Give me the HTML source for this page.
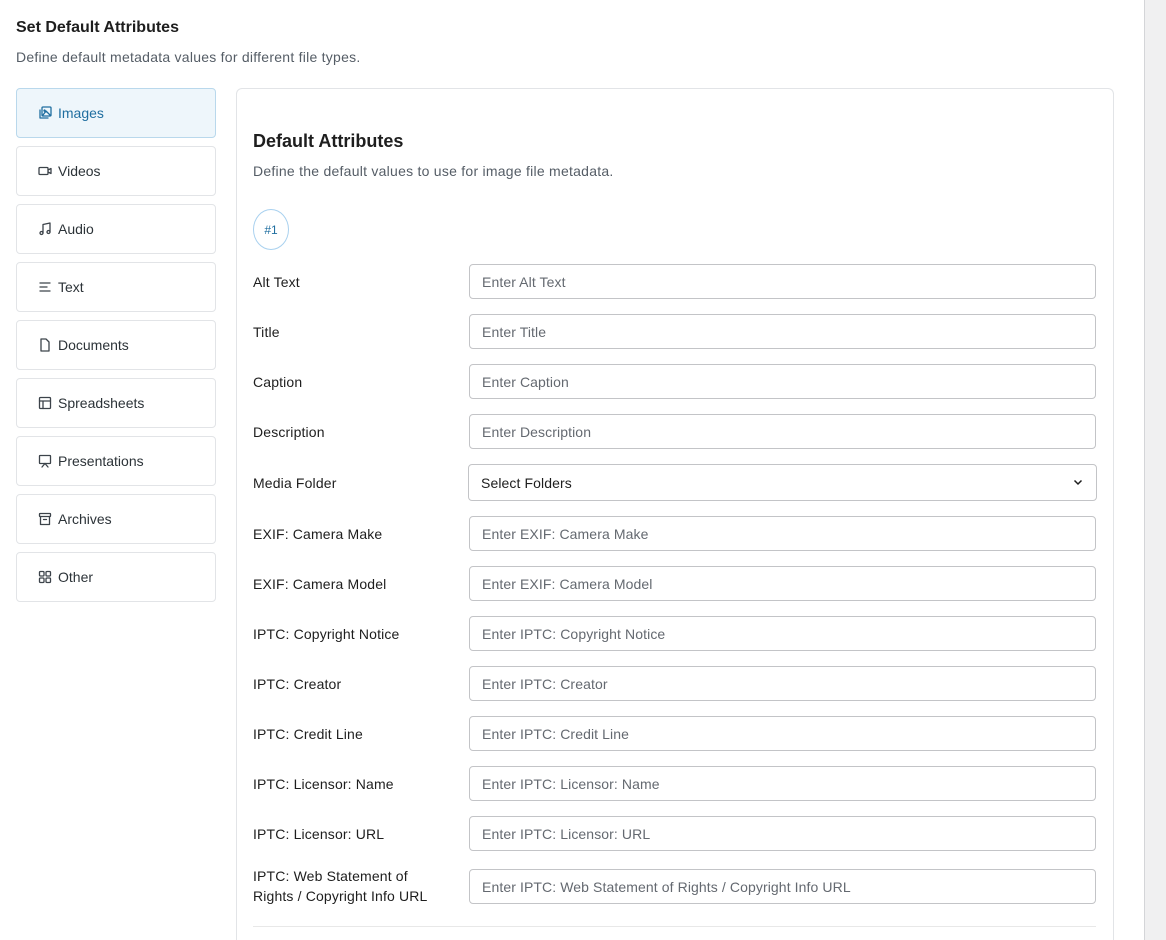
<!DOCTYPE html>
<html style="overflow:hidden;width:1166px;height:940px"><head><style>
*{box-sizing:border-box;margin:0;padding:0}
body{width:1166px;height:940px;overflow:hidden;background:#fff;font-family:"Liberation Sans",Arial,sans-serif;position:relative;color:#1e1e1e}
.h1{position:absolute;left:16px;top:19px;font-size:16px;font-weight:bold;color:#1e1e1e}
.sub{position:absolute;left:16px;top:49px;font-size:14px;letter-spacing:0.25px;color:#555d66}
.nav{position:absolute;left:16px;width:200px;height:50px;border:1px solid #e2e4e7;border-radius:4px;display:flex;align-items:center;padding-left:21px;font-size:14px;color:#2c3338}
.nav svg{width:14px;height:14px;margin-right:6px;fill:none;stroke:#3c434a;stroke-width:1.3;stroke-linecap:round;stroke-linejoin:round}
.nav.act{background:#eef6fb;border-color:#b9d8ec;color:#1f6ea0}
.nav.act svg{stroke:#1f6ea0}
.card{position:absolute;left:236px;top:88px;width:878px;height:852px;border:1px solid #e2e4e7;border-bottom:none;border-radius:6px 6px 0 0}
.h2{position:absolute;left:253px;top:131px;font-size:18px;font-weight:bold}
.sub2{position:absolute;left:253px;top:163px;font-size:14px;letter-spacing:0.25px;color:#555d66}
.badge{position:absolute;left:253px;top:209px;width:36px;height:41px;border:1px solid #a9d1ef;border-radius:50%;font-size:12px;color:#1f6ea0;display:flex;align-items:center;justify-content:center}
.lbl{position:absolute;left:253px;font-size:14px;font-weight:500;color:#1e1e1e;line-height:20px;letter-spacing:0.15px}
.inp{position:absolute;left:469px;width:627px;height:35px;border:1px solid #c3c4c7;border-radius:4px;font-size:14px;color:#646970;padding-left:12px;display:flex;align-items:center;letter-spacing:0.1px}
.sel{left:468px;width:629px;height:37px;color:#1e1e1e}
.hr{position:absolute;left:253px;top:926px;width:843px;border-top:1px solid #e8e8e8}
.gut{position:absolute;left:1144px;top:0;width:22px;height:940px;background:#f0f0f1;border-left:1px solid #d4d5d8}
</style></head><body>
<div class="h1">Set Default Attributes</div>
<div class="sub">Define default metadata values for different file types.</div>

<div class="nav act" style="top:88px"><svg viewBox="0 0 14 14"><rect x="4" y="1" width="9" height="9" rx="1"/><path d="M2 4v8h8M5 9l3-4 4 4M6.5 4a.6.6 0 1 0 .1 0"/></svg>Images</div>
<div class="nav" style="top:146px"><svg viewBox="0 0 14 14"><rect x="1" y="3.5" width="9" height="7" rx="1"/><path d="M10 6l3-1.5v5L10 8"/></svg>Videos</div>
<div class="nav" style="top:204px"><svg viewBox="0 0 14 14"><path d="M5 11V2.5l7-1.5V10"/><circle cx="3.5" cy="11" r="1.5"/><circle cx="10.5" cy="10" r="1.5"/></svg>Audio</div>
<div class="nav" style="top:262px"><svg viewBox="0 0 14 14"><path d="M2 3h10M2 7h7M2 11h10"/></svg>Text</div>
<div class="nav" style="top:320px"><svg viewBox="0 0 14 14"><path d="M3 1h5l3 3v9H3z"/></svg>Documents</div>
<div class="nav" style="top:378px"><svg viewBox="0 0 14 14"><rect x="1.5" y="1.5" width="11" height="11" rx="1"/><path d="M1.5 5h11M5 5v7.5"/></svg>Spreadsheets</div>
<div class="nav" style="top:436px"><svg viewBox="0 0 14 14"><rect x="1.5" y="1.5" width="11" height="8" rx="0.5"/><path d="M7 9.5L4 13M7 9.5l3 3.5"/></svg>Presentations</div>
<div class="nav" style="top:494px"><svg viewBox="0 0 14 14"><rect x="1.5" y="1.5" width="11" height="3" rx="0.5"/><path d="M2.5 4.5v8h9v-8M5.5 7.5h3"/></svg>Archives</div>
<div class="nav" style="top:552px"><svg viewBox="0 0 14 14"><rect x="1.5" y="1.5" width="4.5" height="4.5" rx="1"/><rect x="8" y="1.5" width="4.5" height="4.5" rx="1"/><rect x="1.5" y="8" width="4.5" height="4.5" rx="1"/><rect x="8" y="8" width="4.5" height="4.5" rx="1"/></svg>Other</div>

<div class="card"></div>
<div class="h2">Default Attributes</div>
<div class="sub2">Define the default values to use for image file metadata.</div>
<div class="badge">#1</div>

<div class="lbl" style="top:272px">Alt Text</div><div class="inp" style="top:264px">Enter Alt Text</div>
<div class="lbl" style="top:322px">Title</div><div class="inp" style="top:314px">Enter Title</div>
<div class="lbl" style="top:372px">Caption</div><div class="inp" style="top:364px">Enter Caption</div>
<div class="lbl" style="top:422px">Description</div><div class="inp" style="top:414px">Enter Description</div>
<div class="lbl" style="top:473px">Media Folder</div><div class="inp sel" style="top:464px">Select Folders<svg style="position:absolute;right:13px;top:13px" width="10" height="8" viewBox="0 0 10 8"><path d="M1.5 2.5L5 6l3.5-3.5" fill="none" stroke="#1e1e1e" stroke-width="1.5"/></svg></div>
<div class="lbl" style="top:524px">EXIF: Camera Make</div><div class="inp" style="top:516px">Enter EXIF: Camera Make</div>
<div class="lbl" style="top:574px">EXIF: Camera Model</div><div class="inp" style="top:566px">Enter EXIF: Camera Model</div>
<div class="lbl" style="top:624px">IPTC: Copyright Notice</div><div class="inp" style="top:616px">Enter IPTC: Copyright Notice</div>
<div class="lbl" style="top:674px">IPTC: Creator</div><div class="inp" style="top:666px">Enter IPTC: Creator</div>
<div class="lbl" style="top:724px">IPTC: Credit Line</div><div class="inp" style="top:716px">Enter IPTC: Credit Line</div>
<div class="lbl" style="top:774px">IPTC: Licensor: Name</div><div class="inp" style="top:766px">Enter IPTC: Licensor: Name</div>
<div class="lbl" style="top:824px">IPTC: Licensor: URL</div><div class="inp" style="top:816px">Enter IPTC: Licensor: URL</div>
<div class="lbl" style="top:866px">IPTC: Web Statement of<br>Rights / Copyright Info URL</div><div class="inp" style="top:869px">Enter IPTC: Web Statement of Rights / Copyright Info URL</div>
<div class="hr"></div>
<div class="gut"></div>
</body></html>
